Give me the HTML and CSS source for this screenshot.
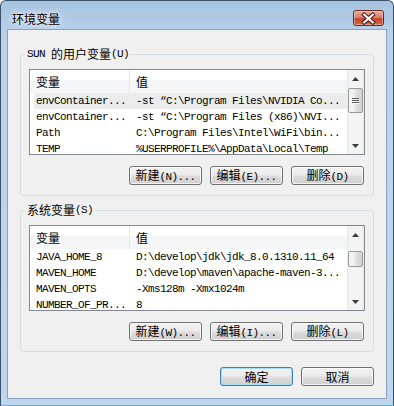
FILE: index.html
```html
<!DOCTYPE html>
<html lang="zh-CN">
<head>
    <meta charset="UTF-8">
    <title>环境变量</title>
    <link rel="stylesheet" href="styles.css">
</head>
<body>
    <div class="window">
        <div class="titlebar">
            <span class="title">环境变量</span>
            <div class="close">
                <svg width="31" height="15" viewBox="0 0 31 15">
                    <path d="M11 3.5 L20 11.5 M20 3.5 L11 11.5" stroke="#4b1f18" stroke-width="4.6" stroke-linecap="square"/>
                    <path d="M11 3.5 L20 11.5 M20 3.5 L11 11.5" stroke="#ffffff" stroke-width="2.4" stroke-linecap="square"/>
                </svg>
            </div>
        </div>

        <div class="client">
            <fieldset class="group">
                <legend><span class="en">SUN </span>的用户变量<span class="en">(U)</span></legend>
                <div class="list">
                    <div class="list-body">
                        <div class="list-head">
                            <div class="hcell">变量</div>
                            <div class="hcell">值</div>
                        </div>
                        <div class="rows">
                            <div class="row selected"><span class="c1">envContainer...</span><span class="c2">-st “C:\Program Files\NVIDIA Co...</span></div>
                            <div class="row"><span class="c1">envContainer...</span><span class="c2">-st “C:\Program Files (x86)\NVI...</span></div>
                            <div class="row"><span class="c1">Path</span><span class="c2">C:\Program Files\Intel\WiFi\bin...</span></div>
                            <div class="row"><span class="c1">TEMP</span><span class="c2">%USERPROFILE%\AppData\Local\Temp</span></div>
                        </div>
                    </div>
                    <div class="scrollbar">
                        <div class="sb-btn">
                            <svg width="7" height="4" viewBox="0 0 7 4"><polygon points="0,4 3.5,0 7,4" fill="#3c3c3c"/></svg>
                        </div>
                        <div class="thumb thumb-user"><div class="grip"></div></div>
                        <div class="sb-btn sb-down">
                            <svg width="7" height="4" viewBox="0 0 7 4"><polygon points="0,0 7,0 3.5,4" fill="#3c3c3c"/></svg>
                        </div>
                    </div>
                </div>
                <div class="group-buttons">
                    <button class="btn">新建<span class="en">(N)...</span></button>
                    <button class="btn">编辑<span class="en">(E)...</span></button>
                    <button class="btn">删除<span class="en">(D)</span></button>
                </div>
            </fieldset>

            <fieldset class="group group-system">
                <legend>系统变量<span class="en">(S)</span></legend>
                <div class="list">
                    <div class="list-body">
                        <div class="list-head">
                            <div class="hcell">变量</div>
                            <div class="hcell">值</div>
                        </div>
                        <div class="rows">
                            <div class="row"><span class="c1">JAVA_HOME_8</span><span class="c2">D:\develop\jdk\jdk_8.0.1310.11_64</span></div>
                            <div class="row"><span class="c1">MAVEN_HOME</span><span class="c2">D:\develop\maven\apache-maven-3...</span></div>
                            <div class="row"><span class="c1">MAVEN_OPTS</span><span class="c2">-Xms128m -Xmx1024m</span></div>
                            <div class="row"><span class="c1">NUMBER_OF_PR...</span><span class="c2">8</span></div>
                        </div>
                    </div>
                    <div class="scrollbar">
                        <div class="sb-btn">
                            <svg width="7" height="4" viewBox="0 0 7 4"><polygon points="0,4 3.5,0 7,4" fill="#3c3c3c"/></svg>
                        </div>
                        <div class="thumb thumb-system"></div>
                        <div class="sb-btn sb-down">
                            <svg width="7" height="4" viewBox="0 0 7 4"><polygon points="0,0 7,0 3.5,4" fill="#3c3c3c"/></svg>
                        </div>
                    </div>
                </div>
                <div class="group-buttons">
                    <button class="btn">新建<span class="en">(W)...</span></button>
                    <button class="btn">编辑<span class="en">(I)...</span></button>
                    <button class="btn">删除<span class="en">(L)</span></button>
                </div>
            </fieldset>

            <div class="dialog-buttons">
                <button class="btn btn-default">确定</button>
                <button class="btn">取消</button>
            </div>
        </div>
    </div>
</body>
</html>
```

FILE: styles.css
```css
body {
    margin: 0;
    font-family: "Noto Sans CJK SC", sans-serif;
    font-size: 12px;
    color: #000;
}
.en {
    font-family: "Liberation Mono", monospace;
    font-size: 11px;
    letter-spacing: -0.6px;
}
.window {
    width: 394px;
    height: 406px;
    box-sizing: border-box;
    border: 1px solid #39506a;
    border-bottom-color: #3cc3d6;
    border-radius: 6px 6px 0 0;
    padding: 0 6px 6px;
    background: linear-gradient(#a8c3e0, #bad2ec 36px, #bfd6ee);
    display: flex;
    flex-direction: column;
}
.titlebar {
    flex: none;
    height: 28px;
    box-sizing: border-box;
    padding-top: 6px;
    display: flex;
    align-items: center;
    justify-content: space-between;
}
.title {
    margin-left: 5px;
    text-shadow: 0 0 5px #fff, 0 0 9px #eef4fb;
}
.close {
    width: 31px;
    height: 16px;
    box-sizing: border-box;
    margin-right: 3px;
    border: 1px solid #6b2b21;
    border-radius: 3px;
    background: linear-gradient(#e7a896, #d98670 45%, #c5452c 55%, #cf6a4c);
    box-shadow: inset 0 0 0 1px rgba(255, 255, 255, 0.35);
    display: flex;
    align-items: center;
    justify-content: center;
}
.close svg {
    display: block;
}
.client {
    flex: 1;
    min-height: 0;
    background: #f0f0f0;
    border: 1px solid #8aa2bc;
    padding: 16px 12px 12px;
    display: flex;
    flex-direction: column;
}
.group {
    flex: none;
    margin: 0;
    min-width: 0;
    border: 1px solid #d5dfe5;
    border-radius: 3px;
    padding: 0 8px 10px;
}
.group-system {
    margin-top: 6px;
}
.group legend {
    display: block;
    height: 16px;
    padding: 0 2px;
    margin-left: -4px;
    line-height: 16px;
}
.group legend .en {
    line-height: 16px;
    vertical-align: top;
}
.list {
    margin-top: 7px;
    height: 86px;
    box-sizing: border-box;
    border: 1px solid #828790;
    background: #fff;
    display: flex;
    overflow: hidden;
}
.list-body {
    flex: 1;
    min-width: 0;
    overflow: hidden;
}
.list-head {
    height: 23px;
    display: grid;
    grid-template-columns: 100px 1fr;
    background: linear-gradient(#ffffff 45%, #f5f6f8 45%);
}
.hcell {
    padding-left: 6px;
    line-height: 23px;
}
.hcell:first-child {
    border-right: 1px solid #e2e5ea;
}
.rows {
    font-family: "Liberation Mono", monospace;
    font-size: 11px;
    letter-spacing: -0.6px;
}
.row {
    height: 16px;
    line-height: 16px;
    margin-left: 4px;
    display: grid;
    grid-template-columns: 96px 1fr;
    white-space: nowrap;
}
.row.selected {
    background: #ececec;
}
.c1 {
    padding-left: 2px;
    overflow: hidden;
}
.c2 {
    padding-left: 6px;
    overflow: hidden;
}
.scrollbar {
    width: 17px;
    flex: none;
    background: linear-gradient(to right, #e9e9e9, #f4f4f4 15%, #f4f4f4 85%, #ebebeb);
    display: flex;
    flex-direction: column;
}
.sb-btn {
    height: 17px;
    flex: none;
    display: flex;
    align-items: center;
    justify-content: center;
}
.sb-btn svg {
    display: block;
}
.sb-down {
    margin-top: auto;
}
.thumb {
    margin: 1px 1px 0;
    box-sizing: border-box;
    border: 1px solid #999;
    border-radius: 2px;
    background: linear-gradient(to right, #f6f6f6, #ededed 45%, #dfdfdf 55%, #d3d3d3);
    display: flex;
    align-items: center;
    justify-content: center;
}
.thumb-user {
    height: 25px;
}
.thumb-system {
    height: 16px;
    margin-top: 8px;
}
.grip {
    width: 7px;
    height: 6px;
    background: repeating-linear-gradient(#5a5a5a 0 1px, #fafafa 1px 2px);
}
.group-buttons {
    margin-top: 11px;
    padding-right: 1px;
    display: flex;
    justify-content: flex-end;
    gap: 8px;
}
.btn {
    width: 73px;
    height: 19px;
    box-sizing: border-box;
    padding: 0;
    border: 1px solid #707070;
    border-radius: 3px;
    background: linear-gradient(#f2f2f2, #ebebeb 48%, #dddddd 52%, #cfcfcf);
    box-shadow: inset 0 0 0 1px rgba(255, 255, 255, 0.75);
    font-family: "Noto Sans CJK SC", sans-serif;
    font-size: 12px;
    line-height: 16px;
    color: #000;
}
.btn-default {
    border-color: #3c7fb1;
    box-shadow: inset 0 0 0 1px #a8dcf5;
}
.dialog-buttons {
    margin-top: 15px;
    display: flex;
    justify-content: flex-end;
    gap: 8px;
}
```
